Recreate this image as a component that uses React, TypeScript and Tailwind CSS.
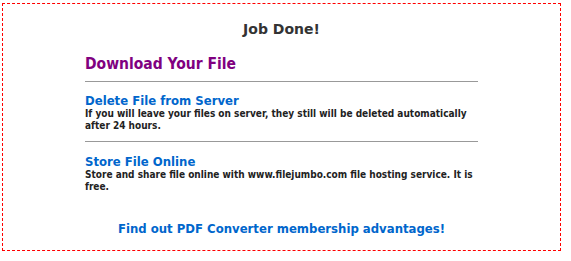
export default function App() {
  return (
    <div className="w-[571px] h-[261px] bg-white pt-[3px] pl-[2px] font-['DejaVu_Sans_Condensed','Liberation_Sans',sans-serif] font-bold">
      <div className="w-[559px] h-[248px] border border-dashed border-[#ff0000] flex flex-col items-center">
        <h1 className="mt-[16px] font-['DejaVu_Sans',sans-serif] text-[14px] leading-[18px] text-[#333333]">Job Done!</h1>
        <div className="w-[393px] mt-[17px]">
          <h2 className="text-[15.5px] leading-[19px] text-[#800080]">Download Your File</h2>
          <hr className="mt-[7px] border-0 border-t border-[#999999]" />
          <h3 className="mt-[11px] text-[13px] leading-[15px] text-[#0066cc]">Delete File from Server</h3>
          <p className="text-[10px] leading-[12px] text-[#222222]">
            If you will leave your files on server, they still will be deleted automatically after 24 hours.
          </p>
          <hr className="mt-[9px] border-0 border-t border-[#999999]" />
          <h3 className="mt-[12px] text-[13px] leading-[15px] text-[#0066cc]">Store File Online</h3>
          <p className="text-[10px] leading-[12px] text-[#222222]">
            Store and share file online with www.filejumbo.com file hosting service. It is free.
          </p>
        </div>
        <a href="#" className="mt-[28px] text-[13px] leading-[15px] text-[#0066cc]">
          Find out PDF Converter membership advantages!
        </a>
      </div>
    </div>
  );
}
